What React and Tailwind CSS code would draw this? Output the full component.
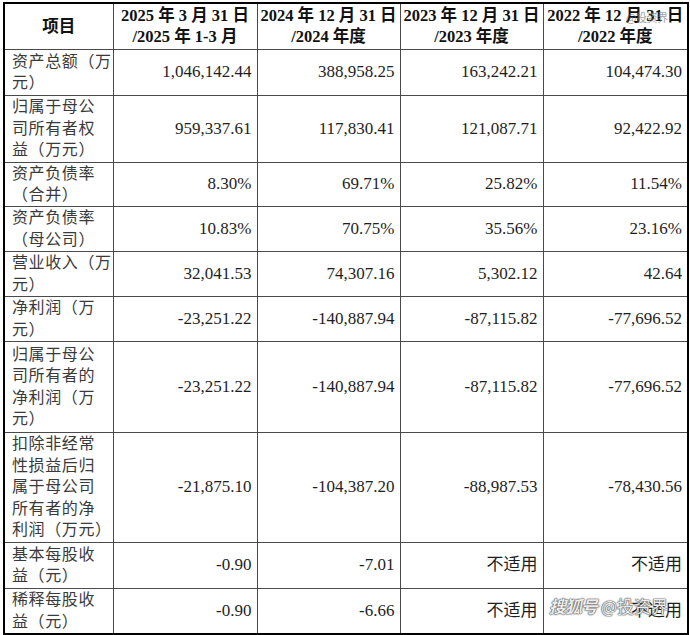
import React from 'react';

const cols = [109, 144, 143, 143, 145];

const headers = [
  ['项目'],
  ['2025 年 3 月 31 日', '/2025 年 1-3 月'],
  ['2024 年 12 月 31 日', '/2024 年度'],
  ['2023 年 12 月 31 日', '/2023 年度'],
  ['2022 年 12 月 31 日', '/2022 年度'],
];

const rows = [
  { h: 46, label: ['资产总额（万', '元）'], values: ['1,046,142.44', '388,958.25', '163,242.21', '104,474.30'] },
  { h: 67, label: ['归属于母公', '司所有者权', '益（万元）'], values: ['959,337.61', '117,830.41', '121,087.71', '92,422.92'] },
  { h: 44, label: ['资产负债率', '（合并）'], values: ['8.30%', '69.71%', '25.82%', '11.54%'] },
  { h: 45, label: ['资产负债率', '（母公司）'], values: ['10.83%', '70.75%', '35.56%', '23.16%'] },
  { h: 45, label: ['营业收入（万', '元）'], values: ['32,041.53', '74,307.16', '5,302.12', '42.64'] },
  { h: 45, label: ['净利润（万', '元）'], values: ['-23,251.22', '-140,887.94', '-87,115.82', '-77,696.52'] },
  { h: 91, label: ['归属于母公', '司所有者的', '净利润（万', '元）'], values: ['-23,251.22', '-140,887.94', '-87,115.82', '-77,696.52'] },
  { h: 110, label: ['扣除非经常', '性损益后归', '属于母公司', '所有者的净', '利润（万元）'], values: ['-21,875.10', '-104,387.20', '-88,987.53', '-78,430.56'] },
  { h: 46, label: ['基本每股收', '益（元）'], values: ['-0.90', '-7.01', '不适用', '不适用'] },
  { h: 46, label: ['稀释每股收', '益（元）'], values: ['-0.90', '-6.66', '不适用', '不适用'] },
];

const font = "font-['Liberation_Serif','Noto_Sans_CJK_SC',serif]";

export default function App() {
  return (
    <div className={`relative w-[690px] h-[635px] bg-white pl-[3px] pt-[2px] ${font}`}>
      <table className="table-fixed border-collapse border-2 border-black w-[684px]">
        <colgroup>
          {cols.map((w, i) => (
            <col key={i} style={{ width: w }} />
          ))}
        </colgroup>
        <thead>
          <tr className="h-[46px]">
            {headers.map((lines, i) => (
              <th
                key={i}
                className="border border-[#4a4a4a] text-center align-middle font-bold text-[16.5px] leading-[21px] text-[#111] px-0"
              >
                {lines.map((l, j) => (
                  <div key={j} className="whitespace-nowrap">{l}</div>
                ))}
              </th>
            ))}
          </tr>
        </thead>
        <tbody>
          {rows.map((r, i) => (
            <tr key={i} style={{ height: r.h }}>
              <td className="border border-[#4a4a4a] align-middle pl-[7px] text-[16px] leading-[21.5px] text-[#3a3a3a] tracking-[0.6px]">
                {r.label.map((l, j) => (
                  <div key={j} className="whitespace-nowrap">{l}</div>
                ))}
              </td>
              {r.values.map((v, j) => (
                <td
                  key={j}
                  className="border border-[#4a4a4a] align-middle text-right pr-[5px] text-[17px] text-[#1e1e1e] whitespace-nowrap"
                >
                  {v}
                </td>
              ))}
            </tr>
          ))}
        </tbody>
      </table>

      <div className="absolute left-[626px] top-[9px] text-[11px] text-[#777]/70 tracking-[-0.5px] font-['Noto_Sans_CJK_SC',sans-serif]">
        @投资界
      </div>

      <div className="absolute left-[549px] top-[597px] flex items-center gap-[4px] text-[17px] leading-none text-white/90 font-['Noto_Sans_CJK_SC',sans-serif] [text-shadow:0_0_1px_#444,0_0_1px_#444,0_0_2px_#666]">
        <span className="italic font-bold tracking-[-1px]">搜狐号</span>
        <span>@投资界</span>
      </div>
    </div>
  );
}
